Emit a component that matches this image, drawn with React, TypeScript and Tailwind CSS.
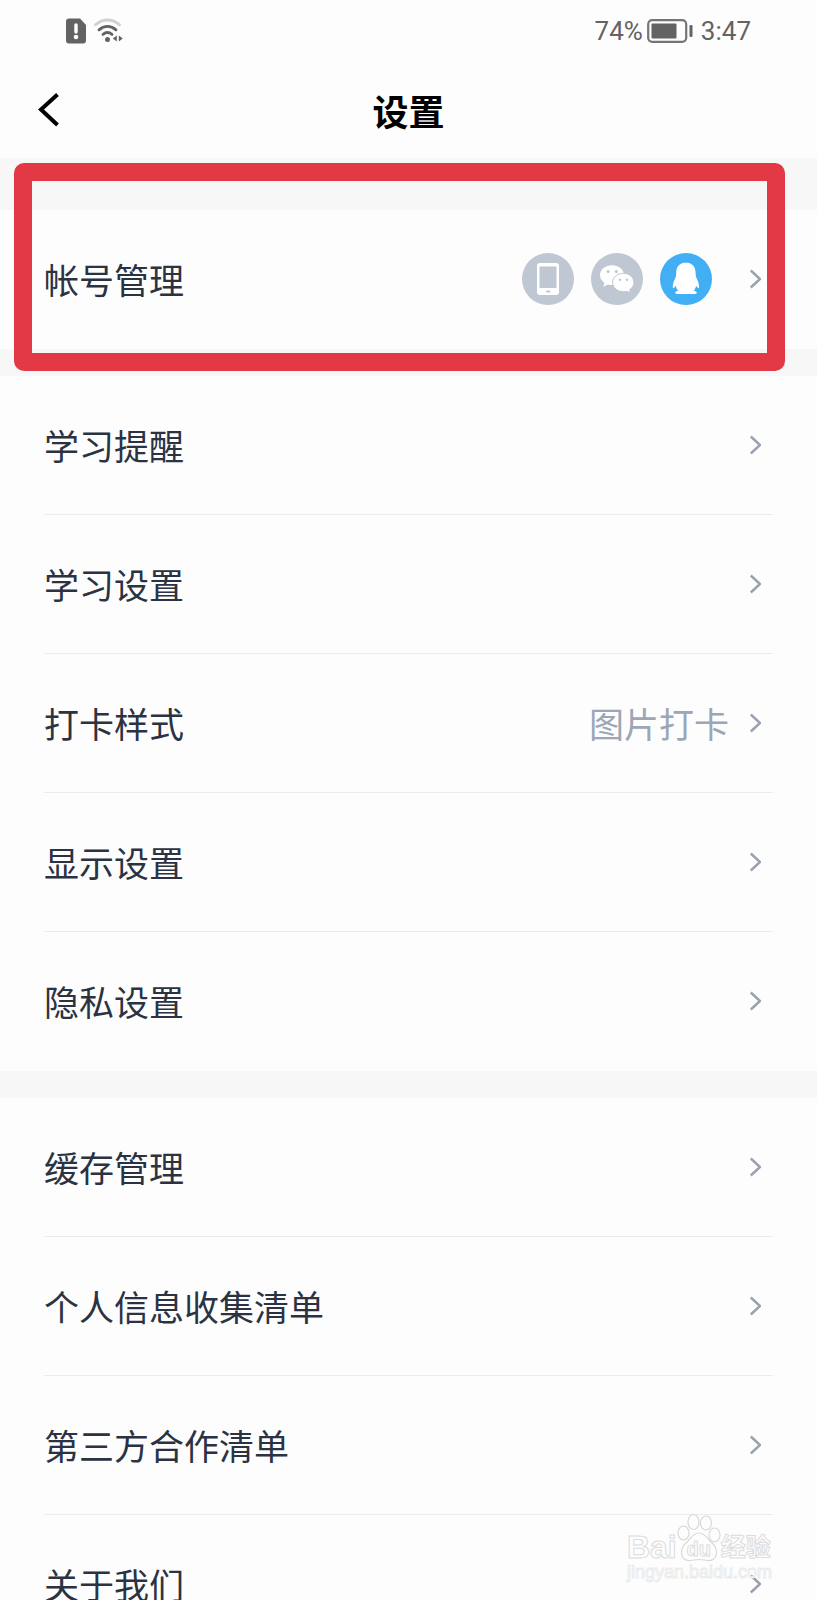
import type { ReactNode } from 'react';

type Item = {
  label: string;
  value?: string;
};

const studyItems: Item[] = [
  { label: '学习提醒' },
  { label: '学习设置' },
  { label: '打卡样式', value: '图片打卡' },
  { label: '显示设置' },
  { label: '隐私设置' },
];

const otherItems: Item[] = [
  { label: '缓存管理' },
  { label: '个人信息收集清单' },
  { label: '第三方合作清单' },
  { label: '关于我们' },
];

const Chevron = () => (
  <svg width="12" height="20" viewBox="0 0 12 20" fill="none" stroke="#9aa1ae" strokeWidth="2.400" className="shrink-0">
    <path d="M1.800 1.500 11 10 1.800 18.500" />
  </svg>
);

const PhoneBadge = () => (
  <svg width="52" height="52" viewBox="0 0 52 52">
    <circle cx="26" cy="26" r="26" fill="#bfc7d3" />
    <rect x="15" y="10" width="22" height="32" rx="3" fill="#fff" />
    <rect x="17.500" y="13.500" width="17" height="21.500" fill="#bfc7d3" />
    <rect x="24" y="37.500" width="4.500" height="2" rx="1" fill="#bfc7d3" />
  </svg>
);

const WechatBadge = () => (
  <svg width="52" height="52" viewBox="0 0 52 52">
    <circle cx="26" cy="26" r="26" fill="#bfc7d3" />
    <path
      d="M21 12.300c-6.700 0-12 4.300-12 9.800 0 3.200 1.700 5.900 4.500 7.700l-1.300 4 4.700-2.400c1.300.4 2.700.6 4.100.6 6.600 0 12-4.400 12-9.900s-5.400-9.800-12-9.800z"
      fill="#fff"
    />
    <path
      d="M32.300 20.300c-5.900 0-10.700 4.100-10.700 9.200s4.800 9.200 10.700 9.200c1.300 0 2.500-.2 3.600-.5l3.700 1.900-1-3.400c2.700-1.700 4.300-4.300 4.300-7.200 0-5.100-4.700-9.200-10.600-9.200z"
      fill="#fff"
      stroke="#bfc7d3"
      strokeWidth="1"
    />
    <g fill="#bfc7d3">
      <circle cx="17.100" cy="18.500" r="1.500" />
      <circle cx="25.300" cy="18.500" r="1.500" />
      <circle cx="29" cy="26.800" r="1.200" />
      <circle cx="36" cy="26.800" r="1.200" />
    </g>
  </svg>
);

const QQBadge = () => (
  <svg width="52" height="52" viewBox="0 0 52 52">
    <circle cx="26" cy="26" r="26" fill="#42aef4" />
    <path
      d="M26 9.500c-6 0-9.800 4.200-9.800 10.300 0 2.600-.3 4.300-1.300 6.300-1.300 2.700-2.300 5.400-2.100 8 .1 1.400.7 1.300 1.500.4l1.400-1.700c.4 2 1.300 3.700 2.700 5-1.800.3-3.200 1-3.200 1.900 0 1 1.400 1.400 3.700 1.400h14.200c2.300 0 3.700-.4 3.700-1.400 0-.9-1.400-1.600-3.200-1.900 1.400-1.300 2.100-3 2.500-5l1.400 1.700c.8.900 1.400 1 1.500-.4.2-2.600-.8-5.300-2.100-8-1-2-1.300-3.700-1.300-6.300 0-6.100-3.800-10.300-9.800-10.300z"
      fill="#fff"
    />
  </svg>
);

const Row = ({ label, children }: { label: string; children?: ReactNode }) => (
  <button className="flex h-[139px] w-full items-center justify-between pr-3 pb-0.5 text-left">
    <span>{label}</span>
    <span className="flex items-center gap-5">
      {children}
      <Chevron />
    </span>
  </button>
);

const Group = ({ items }: { items: Item[] }) => (
  <ul className="bg-[#fdfdfd] px-11">
    {items.map((item) => (
      <li key={item.label} className="shadow-[inset_0_-1px_#ececee] last:shadow-none">
        <Row label={item.label}>
          {item.value && <span className="text-[#9ca6b6]">{item.value}</span>}
        </Row>
      </li>
    ))}
  </ul>
);

const StatusBar = () => (
  <div className="flex h-[62px] items-center justify-between px-[66px] font-[Roboto,sans-serif] text-[26px] text-[#636363]">
    <div className="flex items-center gap-2">
      <svg width="20" height="26" viewBox="0 0 20 26">
        <path d="M3 .5h11L20 7v15.500a3 3 0 0 1-3 3H3a3 3 0 0 1-3-3v-19a3 3 0 0 1 3-3z" fill="#636363" />
        <path d="M10 7v7" stroke="#fff" strokeWidth="3.500" strokeLinecap="round" />
        <circle cx="10" cy="19" r="2.300" fill="#fff" />
      </svg>
      <svg width="29" height="26" viewBox="0 0 29 26" fill="none" strokeWidth="2.800" strokeLinecap="round">
        <path d="M1.500 6.800C8.500.4 18.500.4 25.500 6.800" stroke="#d0d0d0" />
        <path d="M5 11.800c5.300-4.400 11.700-4.400 17 0" stroke="#636363" />
        <path d="M9 16.300c3-2.400 6-2.400 9 0" stroke="#636363" />
        <circle cx="13.500" cy="21.500" r="2.500" fill="#636363" />
        <path d="M22.800 17.500v6l-4-3zM24.800 17.500v6l4-3z" fill="#636363" />
      </svg>
    </div>
    <div className="flex items-center gap-1">
      <span>74%</span>
      <svg width="46" height="24" viewBox="0 0 46 24">
        <rect x="1.200" y="1.200" width="38" height="21.600" rx="4" fill="none" stroke="#757575" strokeWidth="2.200" />
        <rect x="4.500" y="4.500" width="25" height="15" rx="1" fill="#636363" />
        <rect x="42.500" y="6" width="3" height="12" rx="1.200" fill="#636363" />
      </svg>
      <span className="ml-1">3:47</span>
    </div>
  </div>
);

const Watermark = () => (
  <div className="pointer-events-none absolute right-[45px] bottom-[19px] font-[Liberation_Sans,Noto_Sans_CJK_SC,sans-serif] leading-none text-[#fdfdfd] [-webkit-text-stroke:1px_#dcdcdc]">
    <div className="flex items-end">
      <span className="text-[32px] leading-8 font-bold">Bai</span>
      <span className="relative">
        <svg width="44" height="50" viewBox="0 0 44 50" fill="#fdfdfd" stroke="#d9d9d9" strokeWidth="1.200">
          <ellipse cx="6.500" cy="20" rx="5.500" ry="7" />
          <ellipse cx="16.500" cy="9" rx="5.500" ry="7.500" />
          <ellipse cx="29" cy="10" rx="5.500" ry="7" />
          <ellipse cx="37.500" cy="22" rx="5.500" ry="7" />
          <path d="M22 20c-6 0-8 5-12 9-4 3.500-6 7-5.500 11.500.5 5 4 7.500 9 7 3.500-.4 5-1 8.500-1s5 .6 8.500 1c5 .5 8.500-2 9-7 .5-4.500-1.500-8-5.500-11.500-4-4-6-9-12-9z" />
        </svg>
        <span className="absolute inset-x-0 bottom-1 text-center text-[20px] font-bold">du</span>
      </span>
      <span className="text-[25px] leading-8 font-bold">经验</span>
    </div>
    <div className="text-right text-[18px] [-webkit-text-stroke-color:#ebebeb]">jingyan.baidu.com</div>
  </div>
);

export default function App() {
  return (
    <div className="relative h-screen overflow-hidden bg-[#f7f7f7] font-[Noto_Sans_CJK_SC,sans-serif] text-[35px] leading-[52px] text-[#2b3342]">
      <header className="bg-[#fdfdfd]">
        <StatusBar />
        <div className="grid h-24 grid-cols-3 items-center px-[38px]">
          <button aria-label="返回" className="justify-self-start">
            <svg width="22" height="36" viewBox="0 0 22 36" fill="none" stroke="#000" strokeWidth="4">
              <path d="M19.500 2.500 3 17.500l16.500 15.500" />
            </svg>
          </button>
          <h1 className="text-center text-[36px] font-bold text-black">设置</h1>
        </div>
      </header>

      <main className="flex flex-col gap-[27px] pt-[52px]">
        <section className="relative bg-[#fdfdfd] px-11">
          <Row label="帐号管理">
            <span className="mr-[17px] flex items-center gap-[17px]">
              <PhoneBadge />
              <WechatBadge />
              <QQBadge />
            </span>
          </Row>
          {/* highlight frame around the account row */}
          <div className="pointer-events-none absolute -top-[47px] right-8 -bottom-[22px] left-[14px] rounded-[10px] border-[18px] border-[#e33944]" />
        </section>
        <Group items={studyItems} />
        <Group items={otherItems} />
      </main>

      <Watermark />
    </div>
  );
}
